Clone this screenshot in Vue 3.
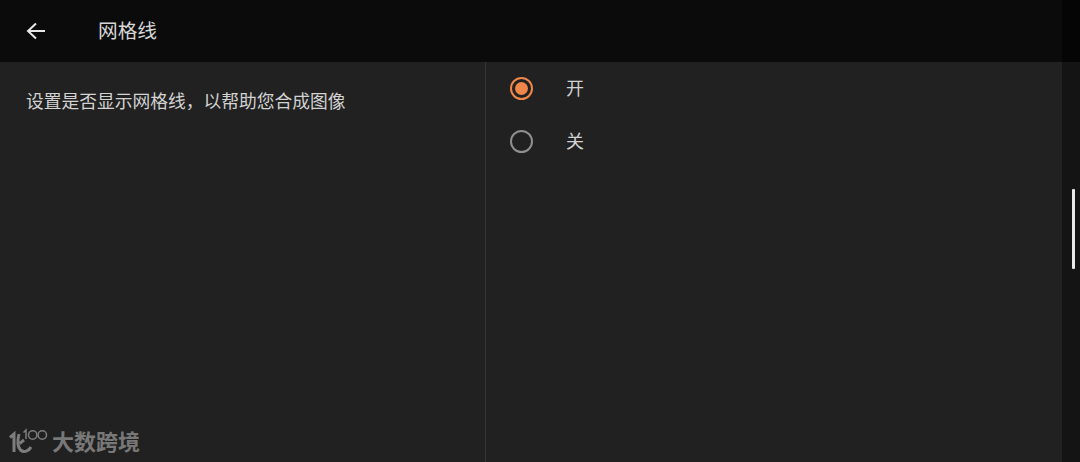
<script setup>
const options = [
  { label: '开', checked: true },
  { label: '关', checked: false }
]
</script>

<template>
  <div class="page">
    <div class="main">
      <header class="topbar">
        <svg class="back" width="20" height="18" viewBox="0 0 20 18">
          <path d="M19 9H2M10 1.500L2 9l8 7.500" fill="none" stroke="#e8e8e8" stroke-width="2" />
        </svg>
        <span class="title">网格线</span>
      </header>
      <div class="content">
        <div class="left">
          <p class="desc">设置是否显示网格线，以帮助您合成图像</p>
          <div class="watermark">
            <svg class="logo" width="40" height="28" viewBox="0 0 40 28">
              <g fill="none" stroke="#7d7d7d" stroke-width="3">
                <path d="M1 9.500l4-3.500v18" />
                <path d="M10 6C8.500 12 8.500 19 11.500 22c3.500 3 8.500 1 10.500-3" />
                <path d="M15 12l-4.500 3.500" />
              </g>
              <g fill="none" stroke="#7d7d7d" stroke-width="1.500">
                <path d="M14.500 4.500l2.500-2.500v9" />
                <circle cx="23.700" cy="7" r="4.200" />
                <circle cx="33.300" cy="7" r="4.200" />
              </g>
            </svg>
            <span class="brand">大数跨境</span>
          </div>
        </div>
        <div class="right">
          <div v-for="opt in options" :key="opt.label" class="option">
            <span class="radio" :class="{ on: opt.checked }"></span>
            <span class="label">{{ opt.label }}</span>
          </div>
        </div>
      </div>
    </div>
    <aside class="rail">
      <div class="rail-top"></div>
      <div class="rail-body">
        <div class="thumb"></div>
      </div>
    </aside>
  </div>
</template>

<style>
html, body { margin: 0; background: #212121; }
</style>

<style scoped>
.page {
  display: flex;
  width: 1080px;
  height: 462px;
  overflow: hidden;
  font-family: "Roboto", "Noto Sans CJK SC", sans-serif;
  background: #212121;
}
.main {
  width: 1062px;
  display: flex;
  flex-direction: column;
}
.topbar {
  height: 62px;
  background: #0b0b0b;
  display: flex;
  align-items: center;
  padding-left: 26px;
  box-sizing: border-box;
}
.back {
  margin-right: 52px;
}
.title {
  font-size: 19.7px;
  line-height: 24px;
  margin-top: 2px;
  color: #d6d6d6;
}
.content {
  flex: 1;
  display: flex;
}
.left {
  width: 486px;
  box-sizing: border-box;
  padding: 27px 0 0 26px;
  border-right: 1px solid #363636;
  flex-shrink: 0;
  display: flex;
  flex-direction: column;
  justify-content: space-between;
}
.desc {
  margin: 1px 0 0;
  font-size: 17.75px;
  line-height: 24px;
  color: #d2d2d2;
}
.watermark {
  display: flex;
  align-items: center;
  margin-left: -17px;
  margin-bottom: 6px;
  gap: 3px;
}
.brand {
  font-size: 22px;
  font-weight: 700;
  color: #787878;
  line-height: 26px;
  margin-top: 2px;
}
.right {
  flex: 1;
  padding-left: 24px;
}
.option {
  height: 53px;
  display: flex;
  align-items: center;
}
.radio {
  width: 23px;
  height: 23px;
  border: 2px solid #8f8f8f;
  border-radius: 50%;
  box-sizing: border-box;
  position: relative;
  margin-right: 33px;
}
.radio.on {
  border-color: #f08649;
}
.radio.on::after {
  content: "";
  position: absolute;
  left: 3px;
  top: 3px;
  width: 13px;
  height: 13px;
  border-radius: 50%;
  background: #f08649;
}
.label {
  font-size: 18px;
  line-height: 24px;
  color: #d2d2d2;
}
.rail {
  width: 18px;
  display: flex;
  flex-direction: column;
}
.rail-top {
  height: 62px;
  background: #050505;
}
.rail-body {
  flex: 1;
  background: #141414;
  padding: 127px 0 0 10px;
}
.thumb {
  width: 3px;
  height: 80px;
  background: #e9e9e9;
  border-radius: 1px;
}
</style>
